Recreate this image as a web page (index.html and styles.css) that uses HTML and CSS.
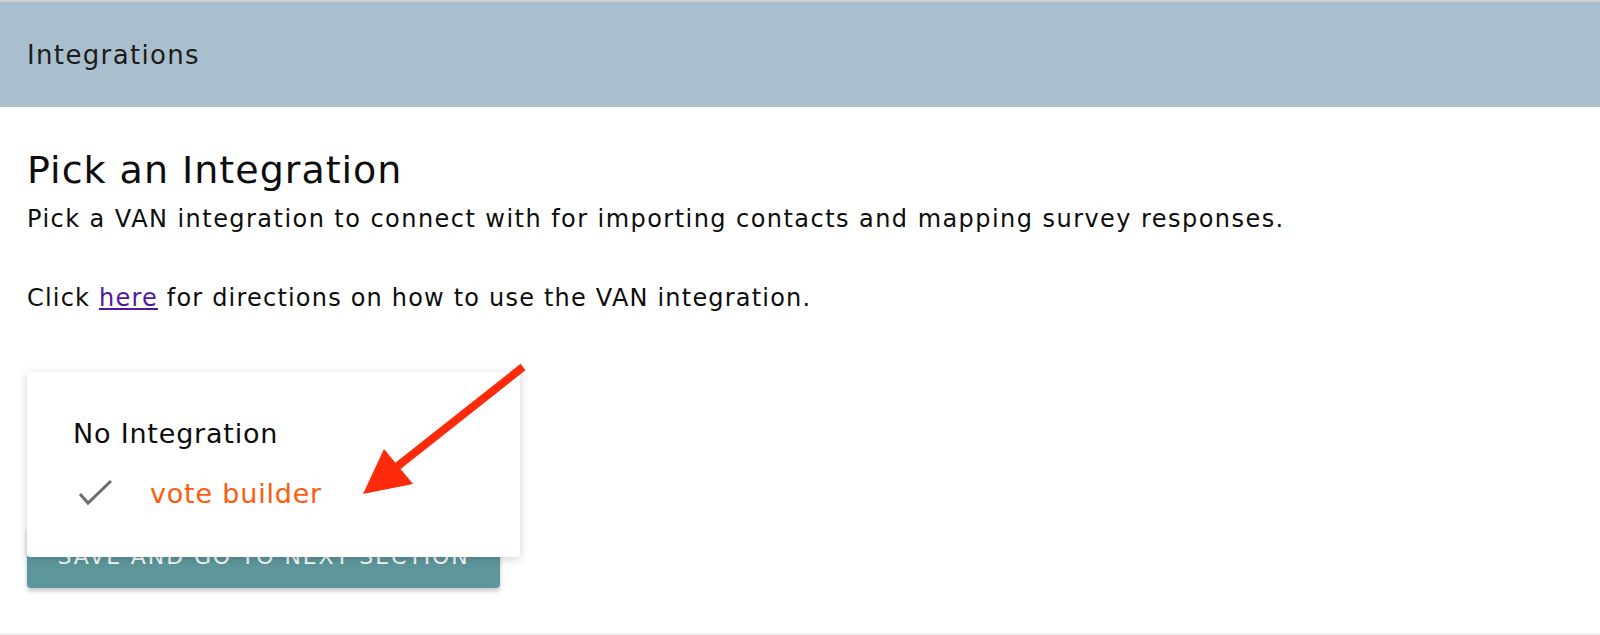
FILE: index.html
```html
<!DOCTYPE html>
<html lang="en">
<head>
  <meta charset="UTF-8">
  <title>Integrations</title>
  <link rel="stylesheet" href="styles.css">
</head>
<body>
  <div class="page">
    <header class="secao">
      Integrations
    </header>

    <main class="conteudo">
      <h1>Pick an Integration</h1>
      <p class="descricao">Pick a VAN integration to connect with for importing contacts and mapping survey responses.</p>
      <p class="descricao link">Click <a href="#">here</a> for directions on how to use the VAN integration.</p>

      <button class="salvar">Save and go to next section</button>
    </main>

    <!-- menu aberto por cima do botao -->
    <ul class="menu">
      <li class="item">No Integration</li>
      <li class="item selecionado">
        <svg class="check" width="38" height="30" viewBox="0 0 38 30"><polyline points="3,16 11,25 34,3" fill="none" stroke="#6d6d6d" stroke-width="3"/></svg>
        vote builder
      </li>
    </ul>

    <svg class="seta" width="200" height="160" viewBox="0 0 200 160">
      <line x1="183" y1="11" x2="54" y2="113" stroke="#fe2a0c" stroke-width="8"/>
      <polygon points="23,138 44,93 73,128" fill="#fe2a0c"/>
    </svg>
  </div>
</body>
</html>
```

FILE: styles.css
```css
:root {
  --azul: #aabfcd;
  --verde: #5e979b;
  --laranja: #ff5b0d;
}
body {
  margin: 0;
  padding: 0;
  font-family: "DejaVu Sans", Verdana, sans-serif;
  color: #0d0d0d;
  background-color: #fff;
}
.page {
  position: relative;
  height: 635px;
  border-top: 2px solid #d2cecd;
  border-bottom: 2px solid #f1f1f1;
  box-sizing: border-box;
  overflow: hidden;
}
.secao {
  background-color: var(--azul);
  height: 105px;
  display: flex;
  align-items: center;
  padding-left: 27px;
  font-size: 26px;
  letter-spacing: 1.35px;
  color: #1c1c1c;
}
.conteudo {
  padding: 0 27px;
}
h1 {
  font-weight: 400;
  font-size: 38px;
  line-height: 44px;
  letter-spacing: 1px;
  margin: 41px 0 12px;
}
.descricao {
  font-size: 24px;
  line-height: 30px;
  letter-spacing: 1.45px;
  margin: 0;
}
.link {
  margin-top: 49px;
  letter-spacing: 1.2px;
}
.descricao a {
  color: #4f1aa0;
}
.salvar {
  display: block;
  margin-top: 212px;
  width: 473px;
  height: 63px;
  border: none;
  border-radius: 4px;
  background-color: var(--verde);
  color: #f4f8f8;
  font-family: inherit;
  font-size: 22px;
  letter-spacing: 1.9px;
  text-transform: uppercase;
  box-shadow: 0 3px 4px rgba(0, 0, 0, 0.22);
}
.menu {
  position: absolute;
  left: 27px;
  top: 370px;
  width: 493px;
  height: 185px;
  margin: 0;
  padding: 31px 0 0;
  list-style: none;
  background-color: #fff;
  border-radius: 3px;
  box-shadow: 0 2px 10px rgba(0, 0, 0, 0.18);
  box-sizing: border-box;
}
.item {
  font-size: 27px;
  letter-spacing: 0.8px;
  height: 60px;
  display: flex;
  align-items: center;
  padding-left: 46px;
}
.selecionado {
  color: var(--laranja);
  padding-left: 50px;
}
.check {
  margin-right: 35px;
}
.seta {
  position: absolute;
  left: 340px;
  top: 354px;
}
```
